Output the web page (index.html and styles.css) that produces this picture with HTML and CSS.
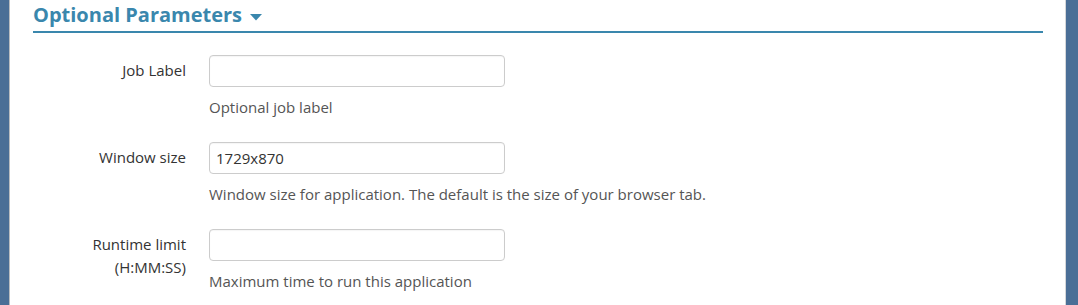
FILE: index.html
```html
<!DOCTYPE html>
<html lang="en">
<head>
  <meta charset="utf-8">
  <link rel="stylesheet" href="styles.css">
</head>
<body>
  <div class="panel">
    <h3 class="section-title">
      Optional Parameters
      <svg class="caret" width="12" height="7" viewBox="0 0 12 7"><path d="M0 0h12L6 6.5z" fill="currentColor"/></svg>
    </h3>

    <div class="form-group">
      <label for="jobLabel">Job Label</label>
      <div class="field">
        <input type="text" id="jobLabel">
        <p class="help">Optional job label</p>
      </div>
    </div>

    <div class="form-group">
      <label for="windowSize">Window size</label>
      <div class="field">
        <input type="text" id="windowSize" value="1729x870">
        <p class="help">Window size for application. The default is the size of your browser tab.</p>
      </div>
    </div>

    <div class="form-group">
      <label for="runtime">Runtime limit<br>(H:MM:SS)</label>
      <div class="field">
        <input type="text" id="runtime">
        <p class="help">Maximum time to run this application</p>
      </div>
    </div>
  </div>
</body>
</html>
```

FILE: styles.css
```css
html, body {
  height: 100%;
}

body {
  margin: 0;
  background: #4a6e96;
  font-family: 'Open Sans', sans-serif;
  font-size: 15px;
  color: #333;
  overflow: hidden;
}

.panel {
  margin-left: 9px;
  width: 1057px;
  min-height: 100%;
  background: #fff;
  border-left: 1px solid #b9bcc0;
  border-right: 1px solid #d4d6d9;
  padding: 0 22px 0 23px;
  box-sizing: border-box;
}

.section-title {
  margin: 0;
  padding-top: 1px;
  font-size: 20px;
  font-weight: 700;
  line-height: 28px;
  color: #3a87ad;
  border-bottom: 2px solid #3a87ad;
  height: 30px;
  box-sizing: content-box;
}

.caret {
  margin-left: 3px;
  vertical-align: 1px;
}

.form-group {
  display: grid;
  grid-template-columns: 153px 296px;
  column-gap: 23px;
  margin-bottom: 25px;
}

.section-title + .form-group {
  margin-top: 22px;
}

.form-group label {
  text-align: right;
  line-height: 23px;
  padding-top: 4px;
}

.form-group input {
  display: block;
  width: 100%;
  height: 32px;
  box-sizing: border-box;
  border: 1px solid #ccc;
  border-radius: 4px;
  padding: 6px 6px;
  font-family: inherit;
  font-size: 15px;
  color: #333;
  box-shadow: inset 0 1px 1px rgba(0,0,0,0.04);
}

.help {
  margin: 10px 0 0;
  line-height: 20px;
  color: #555;
  white-space: nowrap;
}
```
